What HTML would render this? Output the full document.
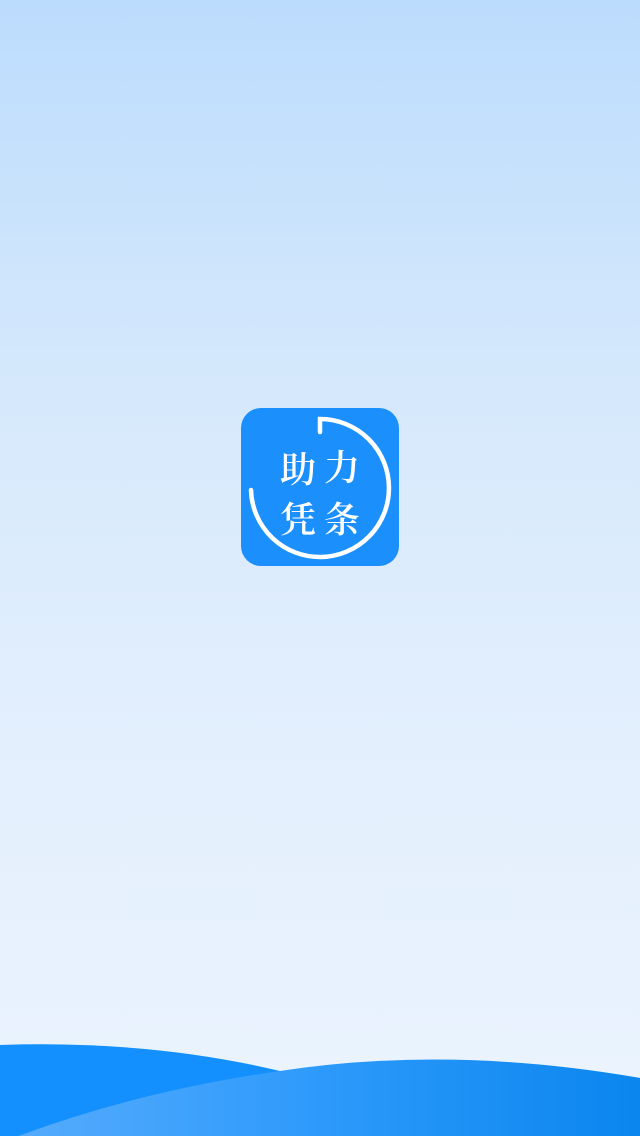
<!DOCTYPE html>
<html><head><meta charset="utf-8"><style>
html,body{margin:0;padding:0}
body{width:640px;height:1136px;overflow:hidden;position:relative;background:linear-gradient(to bottom,#bcdcfd 0%,#d6e9fc 35%,#e3effd 65%,#ebf4fe 100%);}
.icon{position:absolute;left:241px;top:408px;width:158px;height:158px;border-radius:20px;background:#1b8ffc;}
.t{position:absolute;color:#fff;font-family:"Liberation Serif","Noto Serif CJK SC",serif;font-size:36px;line-height:36px;font-weight:600;}
</style></head><body>
<div class="icon"></div>
<svg style="position:absolute;left:0;top:0" width="640" height="1136">
<path d="M320 432 L320 419 A69 69 0 1 1 251 490" fill="none" stroke="#fff" stroke-width="4.5" stroke-linecap="round"/>
<defs><linearGradient id="g" x1="0" x2="1" y1="0" y2="0"><stop offset="0" stop-color="#58acfd"/><stop offset="0.5" stop-color="#2d9afb"/><stop offset="1" stop-color="#0a86ee"/></linearGradient></defs>
<path d="M0 1045 Q150 1040 280 1071 L280 1136 L0 1136Z" fill="#1390fd"/>
<path d="M0 1143 Q130 1092 280 1071 Q450 1045 640 1078 L640 1136 L0 1136Z" fill="url(#g)"/>
</svg>
<div class="t" style="left:280px;top:452px">助</div>
<div class="t" style="left:324px;top:450px">力</div>
<div class="t" style="left:280px;top:502px">凭</div>
<div class="t" style="left:324px;top:502px">条</div>
</body></html>
